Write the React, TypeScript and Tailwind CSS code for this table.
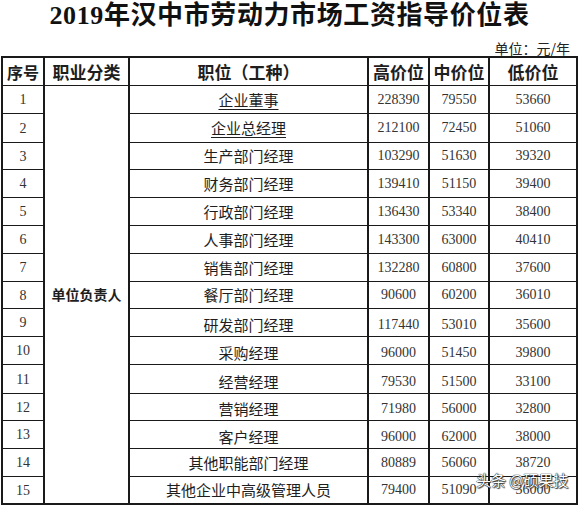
import React from "react";

type Row = {
  idx: number;
  job: string;
  hi: string;
  mid: string;
  lo: string;
  bottom?: boolean;
  underline?: boolean;
};

const rows: Row[] = [
  { idx: 1, job: "企业董事", hi: "228390", mid: "79550", lo: "53660", underline: true },
  { idx: 2, job: "企业总经理", hi: "212100", mid: "72450", lo: "51060", underline: true },
  { idx: 3, job: "生产部门经理", hi: "103290", mid: "51630", lo: "39320" },
  { idx: 4, job: "财务部门经理", hi: "139410", mid: "51150", lo: "39400" },
  { idx: 5, job: "行政部门经理", hi: "136430", mid: "53340", lo: "38400" },
  { idx: 6, job: "人事部门经理", hi: "143300", mid: "63000", lo: "40410" },
  { idx: 7, job: "销售部门经理", hi: "132280", mid: "60800", lo: "37600" },
  { idx: 8, job: "餐厅部门经理", hi: "90600", mid: "60200", lo: "36010" },
  { idx: 9, job: "研发部门经理", hi: "117440", mid: "53010", lo: "35600", bottom: true },
  { idx: 10, job: "采购经理", hi: "96000", mid: "51450", lo: "39800", bottom: true },
  { idx: 11, job: "经营经理", hi: "79530", mid: "51500", lo: "33100", bottom: true },
  { idx: 12, job: "营销经理", hi: "71980", mid: "56000", lo: "32800", bottom: true },
  { idx: 13, job: "客户经理", hi: "96000", mid: "62000", lo: "38000", bottom: true },
  { idx: 14, job: "其他职能部门经理", hi: "80889", mid: "56060", lo: "38720" },
  { idx: 15, job: "其他企业中高级管理人员", hi: "79400", mid: "51090", lo: "36000" },
];

const cjk = "font-['Noto_Sans_CJK_SC',sans-serif]";
const num = "font-['Liberation_Serif','Noto_Sans_CJK_SC',serif]";

export default function App() {
  return (
    <div className="relative w-[579px] h-[505px] overflow-hidden bg-white text-[#1e1e1e]">
      <h1
        className={`text-center text-[26px] leading-[32px] font-bold tracking-[0.6px] text-[#111] font-['Liberation_Serif','Noto_Sans_CJK_SC',serif]`}
      >
        2019年汉中市劳动力市场工资指导价位表
      </h1>
      <div className={`mt-[9px] flex justify-end pr-[9px] text-[14px] leading-[15px] text-[#222] ${cjk}`}>
        单位：元/年
      </div>
      <div
        className="ml-[1px] grid w-[577px] grid-cols-[40px_83px_237px_59px_58px_86px] grid-rows-[27px_27px_28px_26px_27px_27px_27px_27px_26px_27px_27px_28px_26px_27px_27px_26px] gap-x-[2px] gap-y-[1px] border-2 border-b-[3px] border-[#1a1a1a] bg-[#1a1a1a]"
      >
        <div className={`flex items-center justify-center bg-white text-[16px] font-bold ${cjk}`}>序号</div>
        <div className={`flex items-center justify-center bg-white text-[17px] font-bold ${cjk}`}>职业分类</div>
        <div className={`flex items-center justify-center bg-white text-[17px] font-bold ${cjk}`}>职位（工种）</div>
        <div className={`flex items-center justify-center bg-white text-[17px] font-bold ${cjk}`}>高价位</div>
        <div className={`flex items-center justify-center bg-white text-[17px] font-bold ${cjk}`}>中价位</div>
        <div className={`flex items-center justify-center bg-white text-[17px] font-bold ${cjk}`}>低价位</div>
        {rows.map((r) => (
          <React.Fragment key={r.idx}>
            <div className={`flex items-center justify-center bg-white text-[14px] text-[#333] ${num}`}>{r.idx}</div>
            {r.idx === 1 && (
              <div className={`row-span-15 flex items-center justify-center bg-white text-[14px] font-bold ${cjk}`}>
                单位负责人
              </div>
            )}
            <div
              className={`flex justify-center bg-white text-[15px] leading-[16px] ${cjk} ${
                r.bottom ? "items-end pb-[3px]" : "items-center"
              }`}
            >
              <span className={r.underline ? "underline decoration-1 underline-offset-[3px]" : ""}>{r.job}</span>
            </div>
            <div
              className={`flex justify-center bg-white text-[14px] leading-[14px] text-[#333] ${num} ${
                r.bottom ? "items-end pb-[4px]" : "items-center"
              }`}
            >
              {r.hi}
            </div>
            <div
              className={`flex justify-center bg-white text-[14px] leading-[14px] text-[#333] ${num} ${
                r.bottom ? "items-end pb-[4px]" : "items-center"
              }`}
            >
              {r.mid}
            </div>
            <div
              className={`flex justify-center bg-white text-[14px] leading-[14px] text-[#333] ${num} ${
                r.bottom ? "items-end pb-[4px]" : "items-center"
              }`}
            >
              {r.lo}
            </div>
          </React.Fragment>
        ))}
      </div>
      <div
        className={`absolute left-[476px] top-[471px] text-[15px] leading-[17px] text-white ${cjk} [text-shadow:0_0_1px_#000,0_0_1px_#000,1px_1px_1px_#444]`}
      >
        头条 @硕果技
      </div>
    </div>
  );
}
